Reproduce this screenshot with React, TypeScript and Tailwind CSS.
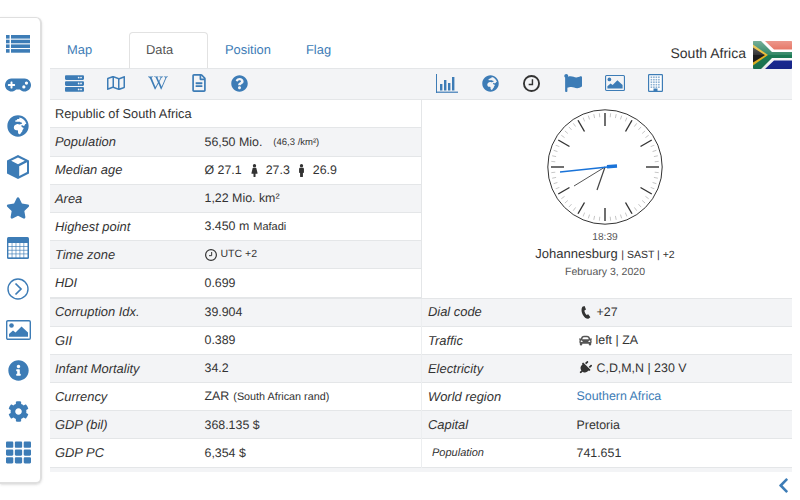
import type { ReactNode } from 'react'
import {
  FaCar, FaChevronLeft, FaCog, FaFemale, FaFlag, FaGamepad, FaGlobeAfrica, FaInfoCircle, FaMale,
  FaPlug, FaQuestionCircle, FaRegFileAlt, FaRegMap, FaServer, FaStar,
  FaTh, FaWikipediaW,
} from 'react-icons/fa'

const iconBlue = 'text-[#3d7cb6]'

function ListIcon() {
  return (
    <svg width="24" height="18" viewBox="0 0 24 18" fill="currentColor">
      {[0, 4.7, 9.4, 14.1].map(y => (
        <g key={y}>
          <rect x="0" y={y} width="3.6" height="3.6" />
          <rect x="5" y={y} width="19" height="3.6" />
        </g>
      ))}
    </svg>
  )
}

function CubeIcon() {
  return (
    <svg width="22" height="24" viewBox="0 0 22 24" fill="currentColor">
      <path d="M11 0 L22 5.6 L22 18.4 L11 24 L0 18.4 L0 5.6 Z M11 2.4 L4.2 5.8 L11 9.2 L17.8 5.8 Z M12.2 11.2 L12.2 21 L20 17.1 L20 7.3 Z" fillRule="evenodd" />
    </svg>
  )
}

function TableIcon() {
  return (
    <svg width="22" height="22" viewBox="0 0 22 22">
      <rect width="22" height="22" rx="1.5" fill="currentColor" />
      {[0, 1, 2, 3].map(r =>
        [0, 1, 2, 3, 4].map(c => (
          <rect key={`${r}-${c}`} x={1.4 + c * 3.95} y={6 + r * 3.75} width="3.3" height="3.1" fill="#fff" />
        )),
      )}
    </svg>
  )
}

function CircleChevron() {
  return (
    <svg width="22" height="22" viewBox="0 0 22 22" fill="none" stroke="currentColor">
      <circle cx="11" cy="11" r="10" strokeWidth="1.4" />
      <path d="M8.5 5.5 L14 11 L8.5 16.5" strokeWidth="1.7" />
    </svg>
  )
}

function ImageIcon({ w, h }: { w: number; h: number }) {
  return (
    <svg width={w} height={h} viewBox="0 0 25 20" fill="currentColor">
      <rect x="0.7" y="0.7" width="23.6" height="18.6" rx="1.2" fill="none" stroke="currentColor" strokeWidth="1.4" />
      <circle cx="5.5" cy="5.5" r="2.3" />
      <path d="M3 16.8 L3 14 L7 10.5 L9.5 12.5 L15.5 6.5 L22 12.5 L22 16.8 Z" />
    </svg>
  )
}

function BarChart() {
  return (
    <svg width="22" height="19" viewBox="0 0 22 19" fill="currentColor">
      <rect x="0" y="0" width="1" height="19" />
      <rect x="0" y="17.6" width="22" height="1.2" />
      <rect x="4" y="10" width="2.4" height="6.5" />
      <rect x="8" y="6" width="2.4" height="10.5" />
      <rect x="12" y="9" width="2.4" height="7.5" />
      <rect x="16" y="3" width="2.4" height="13.5" />
    </svg>
  )
}

function ClockIcon({ size, sw = 2 }: { size: number; sw?: number }) {
  return (
    <svg width={size} height={size} viewBox="0 0 18 18" fill="none" stroke="currentColor">
      <circle cx="9" cy="9" r={9 - sw / 2} strokeWidth={sw} />
      <path d="M10 4.5 L10 10 L6 10" strokeWidth="1.5" />
    </svg>
  )
}

function BuildingIcon() {
  const cells = []
  for (let r = 0; r < 5; r++) {
    for (let c = 0; c < 4; c++) {
      cells.push(<rect key={`${r}-${c}`} x={2.6 + c * 2.5} y={2.4 + r * 2.5} width="1.6" height="1.6" opacity="0.6" />)
    }
  }
  return (
    <svg width="15" height="18" viewBox="0 0 15 18" fill="currentColor">
      <rect x="0.6" y="0.6" width="13.8" height="16.8" rx="0.6" fill="#fff" stroke="currentColor" strokeWidth="1.2" />
      {cells}
      <rect x="5.5" y="14.5" width="4" height="3" />
    </svg>
  )
}

function PhoneIcon() {
  return (
    <svg width="10" height="13" viewBox="0 0 10 13" fill="currentColor">
      <path d="M1.4 0.8 L3.6 0 L5 3.6 L3.4 4.6 C3.5 6.4 4.4 8 5.6 9 L7.2 8.2 L9.4 11.2 L7.4 12.7 C3 13.4 -1.4 5 1.4 0.8 Z" />
    </svg>
  )
}

function Flag() {
  return (
    <svg width="39" height="28" viewBox="0 0 39 28" className="rounded-[1px]">
      <defs>
        <linearGradient id="gloss" x1="0" y1="0" x2="0" y2="1">
          <stop offset="0" stopColor="#fff" stopOpacity="0.4" />
          <stop offset="0.5" stopColor="#fff" stopOpacity="0.1" />
          <stop offset="0.5" stopColor="#000" stopOpacity="0" />
          <stop offset="1" stopColor="#000" stopOpacity="0.1" />
        </linearGradient>
      </defs>
      <rect width="39" height="14" fill="#e0533f" />
      <rect y="14" width="39" height="14" fill="#1a2a96" />
      <path d="M0 0 L12 0 L21 8.5 L39 8.5 L39 19.5 L21 19.5 L12 28 L0 28 Z" fill="#fff" />
      <path d="M0 0 L8 0 L19 11 L39 11 L39 17 L19 17 L8 28 L0 28 Z" fill="#1c7a55" />
      <path d="M0 3.5 L15 14 L0 24.5 Z" fill="#e6b422" />
      <path d="M0 6.5 L12 14 L0 21.5 Z" fill="#1c1c1c" />
      <rect width="39" height="28" fill="url(#gloss)" />
    </svg>
  )
}

function Clock() {
  const ticks = Array.from({ length: 60 }, (_, i) => i)
  return (
    <svg width="120" height="120" viewBox="-60 -60 120 120">
      <circle r="57.2" fill="none" stroke="#333" strokeWidth="1" />
      {ticks.map(i => {
        const big = i % 5 === 0
        return (
          <line
            key={i}
            x1="0"
            y1={big ? -41 : -50}
            x2="0"
            y2={-54}
            stroke={big ? '#333' : '#c4c4c4'}
            strokeWidth={big ? 1.4 : 0.9}
            transform={`rotate(${i * 6})`}
          />
        )
      })}
      <line x1="0" y1="0" x2="-8" y2="23" stroke="#444" strokeWidth="1.2" />
      <line x1="0" y1="0" x2="-31" y2="19" stroke="#555" strokeWidth="1" />
      <line x1="12" y1="-1" x2="-45" y2="5" stroke="#1a73d8" strokeWidth="1.3" />
      <line x1="2" y1="-0.2" x2="12" y2="-1" stroke="#1a73d8" strokeWidth="3.4" />
    </svg>
  )
}

type RowProps = { label: string; shaded?: boolean; small?: boolean; right?: boolean; children: ReactNode }

function Row({ label, shaded, small, right, children }: RowProps) {
  const labelClass = small ? 'pl-[10px] text-[11px]' : right ? 'pl-[6px] text-[12.9px]' : 'pl-[5px] text-[12.9px]'
  return (
    <div className={`flex h-[28.2px] items-center border-b border-[#e4e6e8] ${shaded ? 'bg-[#f3f4f6]' : ''}`}>
      <div className={`w-[154.5px] italic ${labelClass}`}>{label}</div>
      <div className="flex items-center whitespace-nowrap">{children}</div>
    </div>
  )
}

const sideIcons = [
  <ListIcon />,
  <FaGamepad size={26} />,
  <FaGlobeAfrica size={22} />,
  <CubeIcon />,
  <FaStar size={24} />,
  <TableIcon />,
  <CircleChevron />,
  <ImageIcon w={25} h={20} />,
  <FaInfoCircle size={21} />,
  <FaCog size={21} />,
  <FaTh size={25} />,
]

export default function App() {
  return (
    <div className="flex h-[500px] w-[800px] overflow-hidden bg-white font-['Liberation_Sans',Arial,sans-serif] text-[12.4px] text-[#333] [text-rendering:geometricPrecision]">
      <aside className="mt-[17px] h-[467px] w-[42px] shrink-0 rounded-r-md border-t border-r-2 border-b-2 border-[#dfdfdf] pt-[6px] shadow-sm">
        {sideIcons.map((icon, i) => (
          <div key={i} className={`flex h-[40.8px] items-center justify-center pr-[4px] ${iconBlue}`}>
            {icon}
          </div>
        ))}
      </aside>

      <main className="ml-2 w-[742px] pt-[32px]">
        <div className="flex h-[36px] items-stretch text-[12.9px] text-[#3d7cb6]">
          <a className="flex w-[79px] items-center pl-[17px]">Map</a>
          <a className="flex w-[79px] items-center rounded-t border border-b-0 border-[#e2e2e2] bg-white pb-[2px] pl-[16px] text-[#555]">Data</a>
          <a className="flex w-[81px] items-center pl-[17px]">Position</a>
          <a className="flex items-center pl-[17px]">Flag</a>
          <div className="ml-auto flex items-center text-[14px] text-[#333]">
            <span className="mt-[6px] mr-[7px]">South Africa</span>
            <div className="mt-[9px]">
              <Flag />
            </div>
          </div>
        </div>

        <div className="flex h-[32.4px] items-center border-t border-b border-[#e4e6e8] bg-[#f3f4f6] pb-[2.4px]">
          <div className={`flex w-[371px] items-center ${iconBlue}`}>
            <FaServer size={19} className="ml-[15px]" />
            <FaRegMap size={18} className="ml-[23px]" />
            <FaWikipediaW size={20} className="ml-[23px]" />
            <FaRegFileAlt size={18} className="ml-[22px]" />
            <FaQuestionCircle size={17} className="ml-[23px]" />
          </div>
          <div className={`flex items-center ${iconBlue}`}>
            <div className="ml-[15px]">
              <BarChart />
            </div>
            <FaGlobeAfrica size={17} className="ml-[24px]" />
            <div className="ml-[24px] text-[#333]">
              <ClockIcon size={17} />
            </div>
            <FaFlag size={18} className="ml-[24px]" />
            <div className="ml-[23px]">
              <ImageIcon w={20} h={16} />
            </div>
            <div className="ml-[23px]">
              <BuildingIcon />
            </div>
          </div>
        </div>

        <div className="flex border-b border-[#e4e6e8]">
          <div className="w-[372px] shrink-0 border-r border-[#e4e6e8]">
            <div className="flex h-[28px] items-center border-b border-[#e4e6e8] pl-[5px] text-[12.8px]">Republic of South Africa</div>
            <Row label="Population" shaded>
              56,50 Mio.<span className="mt-[2px] ml-[11px] text-[9.5px]">(46,3 /km²)</span>
            </Row>
            <Row label="Median age">
              Ø 27.1
              <FaFemale size={13} className="mr-[5px] ml-[6px]" />
              27.3
              <FaMale size={13} className="mx-[5px]" />
              26.9
            </Row>
            <Row label="Area" shaded>1,22 Mio. km²</Row>
            <Row label="Highest point">
              3.450 m<span className="mt-px ml-[4px] text-[11px]">Mafadi</span>
            </Row>
            <Row label="Time zone" shaded>
              <ClockIcon size={12} sw={1.8} />
              <span className="mt-px ml-[4px] text-[10.5px]">UTC +2</span>
            </Row>
            <Row label="HDI">0.699</Row>
          </div>
          <div className="flex flex-1 flex-col items-center pt-[7px] pr-[4px]">
            <Clock />
            <div className="mt-[4px] text-[10.2px] leading-[14px] text-[#555]">18:39</div>
            <div className="text-[13px] leading-[18px]">
              Johannesburg <span className="text-[10.5px]">| SAST | +2</span>
            </div>
            <div className="mt-[1px] text-[10.5px] leading-[15px] text-[#555]">February 3, 2020</div>
          </div>
        </div>

        <div className="flex">
          <div className="w-[371px] shrink-0">
            <Row label="Corruption Idx." shaded>39.904</Row>
            <Row label="GII">0.389</Row>
            <Row label="Infant Mortality" shaded>34.2</Row>
            <Row label="Currency">
              ZAR<span className="mt-px ml-[4px] text-[10.8px]">(South African rand)</span>
            </Row>
            <Row label="GDP (bil)" shaded>368.135 $</Row>
            <Row label="GDP PC">6,354 $</Row>
          </div>
          <div className="flex-1 border-l border-[#eceef0]">
            <Row label="Dial code" shaded right>
              <div className="mr-[6px] ml-[4px]">
                <PhoneIcon />
              </div>
              +27
            </Row>
            <Row label="Traffic" right>
              <FaCar size={13} className="mr-[4px] ml-[2px] text-[#555]" />left | ZA
            </Row>
            <Row label="Electricity" shaded right>
              <FaPlug size={14} className="mr-[5px] ml-[1px] rotate-45" />C,D,M,N | 230 V
            </Row>
            <Row label="World region" right>
              <span className="text-[#3d7cb6]">Southern Africa</span>
            </Row>
            <Row label="Capital" shaded right>Pretoria</Row>
            <Row label="Population" small>741.651</Row>
          </div>
        </div>
        <div className="h-[4px] bg-[#f3f4f6]" />
        <div className="flex justify-end pt-[5px]">
          <FaChevronLeft size={17} className={iconBlue} />
        </div>
      </main>
    </div>
  )
}
